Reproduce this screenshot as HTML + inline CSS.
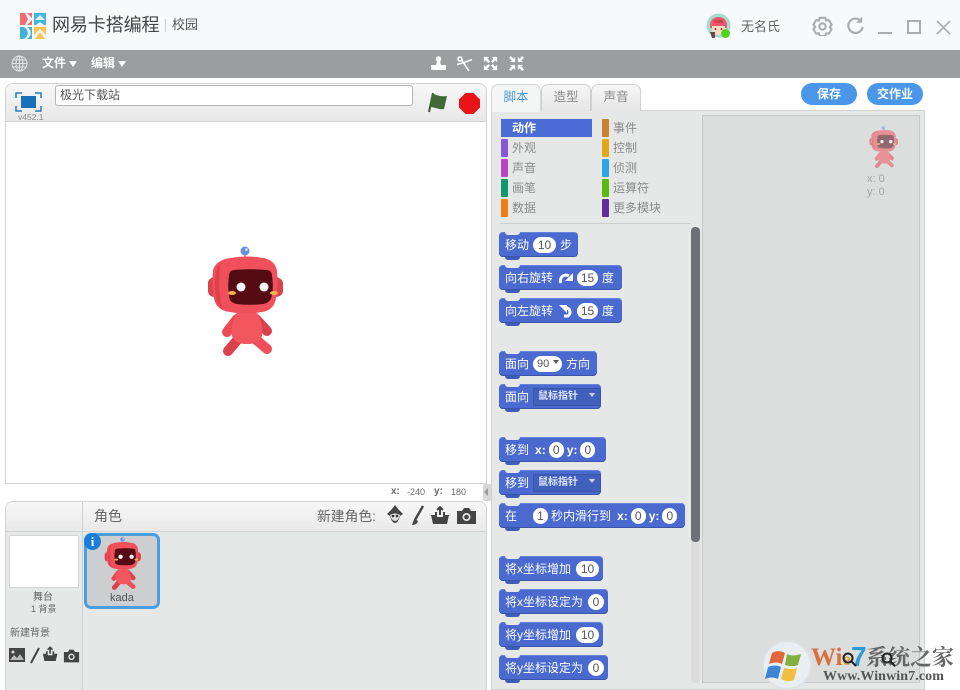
<!DOCTYPE html>
<html lang="zh"><head><meta charset="utf-8"><title>网易卡搭编程</title>
<style>
*{box-sizing:border-box}
html,body{margin:0;padding:0}
body{width:960px;height:690px;position:relative;overflow:hidden;background:#fff;font-family:"Liberation Sans","Noto Sans CJK SC",sans-serif;color:#555}
.a{position:absolute}
.t{position:absolute;white-space:nowrap;line-height:1}
.cat{position:absolute;width:7px;height:18px;border-radius:1px}
.cl{position:absolute;font-size:12px;line-height:18px;color:#8b8b8b;white-space:nowrap}
.b{position:absolute;left:499px;height:25px;background:#4a6ad0;border-radius:4px;color:#fff;font-size:12px;display:flex;align-items:center;padding-left:6px;white-space:nowrap;box-shadow:inset 0 -1px 0 #3a55a8,inset 0 1px 0 #6582dc}
.b:before{content:"";position:absolute;left:6px;top:0;width:15px;height:3px;background:#e6e8e8;border-radius:0 0 6px 6px}
.b:after{content:"";position:absolute;left:6px;bottom:-3px;width:15px;height:3px;background:#3f5cb8;border-radius:0 0 6px 6px}
.p{display:inline-flex;align-items:center;justify-content:center;background:#fff;color:#555;border-radius:8px;height:16px;font-size:12px;margin:0 4px}
.d{display:inline-block;background:#4160bd;color:#dfe5f7;height:18px;line-height:18px;font-size:10px;font-weight:bold;padding-left:5px;margin-left:4px;width:68px;position:relative;box-shadow:inset 0 0 0 1px #3a55a8}
.d:after{content:"";position:absolute;right:6px;top:5px;border:3px solid transparent;border-top:4px solid #cfd8f2}
.tab{position:absolute;top:84px;width:50px;height:27px;background:linear-gradient(#f6f6f6,#e6e6e6);border:1px solid #d0d0d0;border-bottom:none;border-radius:7px 7px 0 0;font-size:12.5px;text-align:center;line-height:24px;color:#8b8b8b}
.btn{position:absolute;top:83px;height:22px;background:#4a97ea;border-radius:11px;color:#fff;font-size:12px;font-weight:bold;text-align:center;line-height:22px}
</style></head>
<body>
<svg width="0" height="0" style="position:absolute"><defs>
<g id="robot">
<circle cx="38" cy="5" r="4.500" fill="#6a8fe0"/><circle cx="39.500" cy="3.500" r="1.300" fill="#dfe8fb"/><rect x="37" y="9" width="2" height="4" fill="#e88"/>
<path d="M8 31h0c-4 0-7 3-7 6v8c0 4 3 6 7 6z" fill="#d8434d"/><path d="M68 31c4 0 8 3 8 6v8c0 4-4 6-8 6z" fill="#d8434d"/>
<path d="M24 12c10-2 22-2 32 0 8 1 13 6 14 13 1 9 1 18-1 27-1 8-6 13-14 14-11 2-21 2-32 0-9-1-15-6-16-14-2-9-2-18-1-27 1-7 8-12 18-13z" fill="#f0505b"/>
<path d="M14 16C9 21 8 30 8 40c0 9 1 18 8 24-4-10-5-36-2-48z" fill="#dd414c"/>
<path d="M28 24c9-1 21-1 31 0 4 0 6 2 6 6 1 6 1 13 0 19-1 6-4 8-9 9-8 1-17 1-26 0-5-1-8-3-8-9-1-6-1-13 0-19 0-4 2-6 6-6z" fill="#550b13"/>
<circle cx="34" cy="41" r="4.500" fill="#fff"/><circle cx="57" cy="41" r="4.500" fill="#fff"/>
<ellipse cx="25" cy="47" rx="4" ry="2" fill="#f3b24b"/><ellipse cx="67" cy="47" rx="4" ry="2" fill="#f3b24b"/>
<path d="M30 73L20 86" stroke="#ec4a55" stroke-width="10" stroke-linecap="round"/>
<path d="M49 73L60 85" stroke="#d8434d" stroke-width="10" stroke-linecap="round"/>
<path d="M32 92L21 105" stroke="#dc424c" stroke-width="10" stroke-linecap="round"/>
<path d="M47 92L60 103" stroke="#ee4f5a" stroke-width="10" stroke-linecap="round"/>
<path d="M30 67h20c4 6 6 14 5 23-2 5-6 8-15 8-9 0-13-3-15-8-1-9 1-17 5-23z" fill="#f2565f"/>
</g>
<g id="upl"><path d="M1 9h4v-3h2v5h6v-5h2v3h4l-2 9H3z" fill="#444"/><path d="M10 9V2M7 4l3-3 3 3" stroke="#444" stroke-width="2" fill="none"/></g>
<g id="cam"><path d="M1 5h5l2-3h5l2 3h5v13H1z" fill="#444"/><circle cx="10.500" cy="11" r="4" fill="#e6e8e8"/><circle cx="10.500" cy="11" r="2.300" fill="#444"/></g>
</defs></svg>

<!-- title bar -->
<div class="a" style="left:0;top:0;width:960px;height:50px;background:#f8f9fb"></div>
<svg class="a" style="left:19px;top:12px" width="28" height="27" viewBox="0 0 28 27">
<path d="M1 1h12v12H1z" fill="#f4f4f4"/><path d="M1 1h5l3 6-3 6H1zM8 1h5v5zM13 13H8l5-5z" fill="#ee6f72"/>
<path d="M15 1h12v12H15z" fill="#41b7d9"/><path d="M21 3l5 5H16zM17 13l4-3 4 3z" fill="#f4f4f4"/>
<path d="M1 15h12v12H1z" fill="#41b2da"/><path d="M5 15c5 3 5 9 0 12h3c5-3 5-9 0-12z" fill="#f4f4f4"/>
<path d="M15 15h12v12H15z" fill="#f6c453"/><path d="M21 17l6 6v4H15v-4z" fill="#f4f4f4"/><path d="M21 20l5 7H16z" fill="#f6c453"/>
</svg>
<div class="t" style="left:52px;top:16px;font-size:18px;color:#444;letter-spacing:-.1px">网易卡搭编程</div>
<div class="a" style="left:165px;top:19px;width:1px;height:13px;background:#ccc"></div>
<div class="t" style="left:172px;top:18px;font-size:13px;color:#555">校园</div>

<svg class="a" style="left:706px;top:13px" width="27" height="27" viewBox="0 0 27 27">
<circle cx="12.500" cy="12.500" r="12" fill="#a5dccf"/><path d="M4 12c0-5 4-8 8.500-8S21 7 21 12v3H4z" fill="#ee5a6c"/><path d="M6 13h13v5c-1 3-3 4-6.500 4S7 21 6 18z" fill="#fbdcc8"/><path d="M8 7h9v3H8z" fill="#d8404f"/><circle cx="9.500" cy="16" r="1" fill="#933"/><circle cx="15.500" cy="16" r="1" fill="#933"/><path d="M4 19h5v6H6z" fill="#6b4a4a"/>
<circle cx="19.500" cy="20.500" r="4.500" fill="#4fd21e"/></svg>
<div class="t" style="left:741px;top:20px;font-size:13px;color:#666">无名氏</div>
<svg class="a" style="left:812px;top:16px" width="21" height="20" viewBox="0 0 22 22" fill="none" stroke="#a9acb0" stroke-width="2.300"><path d="M8 2h6l1 3 3-.5 3 5-2 2.500 2 2.500-3 5-3-.5-1 3H8l-1-3-3 .5-3-5L3 12 1 9.500l3-5 3 .5z"/><circle cx="11" cy="11.500" r="3.500"/></svg>
<svg class="a" style="left:846px;top:16px" width="18" height="19" viewBox="0 0 20 20" fill="none" stroke="#a9acb0" stroke-width="2.400"><path d="M17 5.500a8 8 0 1 0 1.500 6"/><path d="M18 0v7h-7" stroke="none" fill="#a9acb0"/></svg>
<div class="a" style="left:878px;top:32px;width:14px;height:2px;background:#a9acb0"></div>
<div class="a" style="left:907px;top:20px;width:14px;height:14px;border:2px solid #a9acb0"></div>
<svg class="a" style="left:936px;top:20px" width="15" height="15" viewBox="0 0 16 16" stroke="#a9acb0" stroke-width="1.800"><path d="M1 1l14 14M15 1L1 15"/></svg>

<!-- menu bar -->
<div class="a" style="left:0;top:50px;width:960px;height:28px;background:#9c9d9f"></div>
<svg class="a" style="left:11px;top:55px" width="17" height="17" viewBox="0 0 17 17" fill="none" stroke="#e4e4e4" stroke-width="1"><circle cx="8.500" cy="8.500" r="7.500"/><ellipse cx="8.500" cy="8.500" rx="3.500" ry="7.500"/><path d="M1 8.500h15M2 5h13M2 12h13M8.500 1v15"/></svg>
<div class="t" style="left:42px;top:57px;font-size:12px;font-weight:bold;color:#fff">文件</div>
<div class="a" style="left:69px;top:61px;border:4px solid transparent;border-top:6px solid #fff"></div>
<div class="t" style="left:91px;top:57px;font-size:12px;font-weight:bold;color:#fff">编辑</div>
<div class="a" style="left:118px;top:61px;border:4px solid transparent;border-top:6px solid #fff"></div>
<svg class="a" style="left:431px;top:56px" width="15" height="15" viewBox="0 0 15 15" fill="#fff"><circle cx="7.500" cy="3" r="2.800"/><path d="M6 5h3l1 4h5v5H0V9h5z"/></svg>
<svg class="a" style="left:457px;top:55px" width="16" height="17" viewBox="0 0 16 17" fill="none" stroke="#fff" stroke-width="1.600"><circle cx="3" cy="4" r="2"/><path d="M5 5.500L12 16M0 9.500l6-1.500 9-3.500"/></svg>
<svg class="a" style="left:483px;top:56px" width="15" height="15" viewBox="0 0 17 17" fill="#fff"><path d="M1 1h6L5 3l3 3-2 2-3-3-2 2zM16 1v6l-2-2-3 3-2-2 3-3-2-2zM1 16v-6l2 2 3-3 2 2-3 3 2 2zM16 16h-6l2-2-3-3 2-2 3 3 2-2z"/></svg>
<svg class="a" style="left:509px;top:56px" width="15" height="15" viewBox="0 0 17 17" fill="#fff"><path d="M7 7H1l2-2-3-3 2-2 3 3 2-2zM10 7V1l2 2 3-3 2 2-3 3 2 2zM7 10v6l-2-2-3 3-2-2 3-3-2-2zM10 10h6l-2 2 3 3-2 2-3-3-2 2z"/></svg>

<!-- stage -->
<div class="a" style="left:5px;top:83px;width:482px;height:401px;background:#fff;border:1px solid #d2d2d2;border-radius:8px 8px 0 0"></div>
<div class="a" style="left:6px;top:84px;width:480px;height:38px;background:linear-gradient(#f7f7f7,#e8e8e8);border-bottom:1px solid #d2d2d2;border-radius:7px 7px 0 0"></div>
<svg class="a" style="left:15px;top:92px" width="27" height="20" viewBox="0 0 27 20"><rect x="6" y="4" width="15" height="12" fill="#1a70b8"/><path d="M1 6V1h6M20 1h6v5M26 14v5h-6M7 19H1v-5" fill="none" stroke="#2c7ab8" stroke-width="1.500"/></svg>
<div class="t" style="left:18px;top:113px;font-size:8.500px;color:#8b8b8b">v452.1</div>
<div class="a" style="left:55px;top:85px;width:358px;height:21px;background:#fff;border:1px solid #b5b5b5;border-radius:3px;font-size:12px;line-height:18px;padding-left:4px;color:#555">极光下载站</div>
<svg class="a" style="left:425px;top:90px" width="24" height="24" viewBox="0 0 24 24"><path d="M4 22L8 3" stroke="#3d5a2e" stroke-width="2"/><path d="M7 3c4 2 8 4 15 3l-3 13c-5 1-9-2-14-2z" fill="#3f6a35"/></svg>
<svg class="a" style="left:459px;top:93px" width="21" height="21" viewBox="0 0 21 21"><path d="M6.500 0h8L21 6.500v8L14.500 21h-8L0 14.500v-8z" fill="#e8141a"/></svg>
<svg class="a" style="left:207px;top:246px" width="76" height="110" viewBox="0 0 76 110"><use href="#robot"/></svg>

<div class="t" style="left:391px;top:487px;font-size:10px;font-weight:bold;color:#666">x:</div>
<div class="t" style="left:407px;top:488px;font-size:9px;color:#666">-240</div>
<div class="t" style="left:434px;top:487px;font-size:10px;font-weight:bold;color:#666">y:</div>
<div class="t" style="left:451px;top:488px;font-size:9px;color:#666">180</div>
<div class="a" style="left:483px;top:484px;width:9px;height:17px;background:#d8d8d8;border-radius:2px"></div>
<div class="a" style="left:484px;top:488px;border:4px solid transparent;border-right:4px solid #999;border-left:none"></div>

<!-- sprites -->
<div class="a" style="left:5px;top:501px;width:482px;height:189px;background:#e6e8e8;border:1px solid #d2d2d2;border-bottom:none;border-radius:8px 8px 0 0"></div>
<div class="a" style="left:6px;top:502px;width:480px;height:30px;background:linear-gradient(#f7f7f7,#e9e9e9);border-bottom:1px solid #d2d2d2;border-radius:7px 7px 0 0"></div>
<div class="a" style="left:82px;top:502px;width:1px;height:188px;background:#d0d0d0"></div>
<div class="t" style="left:94px;top:509px;font-size:14px;color:#666">角色</div>
<div class="t" style="left:317px;top:510px;font-size:13.800px;color:#666">新建角色:</div>
<svg class="a" style="left:386px;top:505px" width="18" height="20" viewBox="0 0 18 20"><path d="M9 0l3 4 5 5-3 2c-1 4-3 7-5 7s-4-3-5-7L1 9l5-5z" fill="#444"/><path d="M4 10c3-2 7-2 10 0-1 4-3 6-5 6s-4-2-5-6z" fill="#ddd"/><circle cx="7" cy="11" r="1.300" fill="#333"/><circle cx="11" cy="11" r="1.300" fill="#333"/></svg>
<svg class="a" style="left:409px;top:505px" width="16" height="21" viewBox="0 0 16 21"><path d="M14 1L6 15" stroke="#444" stroke-width="2.400"/><path d="M6 14l3 2c-1 3-3 4-6 4 1-2 1-5 3-6z" fill="#444"/></svg>
<svg class="a" style="left:430px;top:506px" width="21" height="20" viewBox="0 0 21 20"><use href="#upl"/></svg>
<svg class="a" style="left:456px;top:506px" width="21" height="20" viewBox="0 0 21 20"><use href="#cam"/></svg>

<div class="a" style="left:9px;top:535px;width:70px;height:53px;background:#fff;border:1px solid #d5d5d5"></div>
<div class="t" style="left:33px;top:593px;font-size:10px;color:#666">舞台</div>
<div class="t" style="left:31px;top:605px;font-size:9px;color:#666">1 背景</div>
<div class="t" style="left:10px;top:629px;font-size:10px;color:#666">新建背景</div>
<svg class="a" style="left:9px;top:648px" width="16" height="14" viewBox="0 0 16 14"><rect width="16" height="14" fill="#444"/><path d="M1 12l4-5 3 3 3-4 4 6z" fill="#bbb"/><circle cx="4" cy="4" r="1.500" fill="#ddd"/></svg>
<svg class="a" style="left:28px;top:647px" width="13" height="18" viewBox="0 0 13 18"><path d="M11 1L3 16" stroke="#444" stroke-width="2"/></svg>
<svg class="a" style="left:42px;top:646px" width="17" height="17" viewBox="0 0 21 20"><use href="#upl"/></svg>
<svg class="a" style="left:63px;top:648px" width="17" height="16" viewBox="0 0 21 20"><use href="#cam"/></svg>

<div class="a" style="left:84px;top:533px;width:76px;height:76px;background:#ccced0;border:3px solid #4a9ddf;border-radius:7px"></div>
<svg class="a" style="left:104px;top:537px" width="37" height="53" viewBox="0 0 76 110"><use href="#robot"/></svg>
<div class="a" style="left:84px;top:533px;width:17px;height:17px;background:#1a7ed8;border-radius:50%;color:#fff;font:bold 13px/17px 'Liberation Serif',serif;text-align:center">i</div>
<div class="t" style="left:110px;top:593px;font-size:11px;color:#555">kada</div>

<!-- tabs + scripts -->
<div class="a" style="left:491px;top:110px;width:434px;height:580px;background:#e6e8e8;border:1px solid #d2d2d2"></div>
<div class="tab" style="left:491px;background:#f4f5f5;color:#4a9dd4;height:28px;z-index:2;border-color:#d6d6d6">脚本</div>
<div class="tab" style="left:541px">造型</div>
<div class="tab" style="left:591px">声音</div>
<div class="btn" style="left:801px;width:56px;top:83px">保存</div>
<div class="btn" style="left:867px;width:56px;top:83px">交作业</div>

<div class="a" style="left:501px;top:119px;width:91px;height:18px;background:#4a6cd4;color:#fff;font-size:12px;font-weight:bold;line-height:18px;padding-left:11px">动作</div>
<div class="cat" style="left:501px;top:139px;background:#8a55d7"></div><div class="cl" style="left:512px;top:139px">外观</div>
<div class="cat" style="left:501px;top:159px;background:#bb42c3"></div><div class="cl" style="left:512px;top:159px">声音</div>
<div class="cat" style="left:501px;top:179px;background:#0e9a6c"></div><div class="cl" style="left:512px;top:179px">画笔</div>
<div class="cat" style="left:501px;top:199px;background:#ee7d16"></div><div class="cl" style="left:512px;top:199px">数据</div>
<div class="cat" style="left:602px;top:119px;background:#c88330"></div><div class="cl" style="left:613px;top:119px">事件</div>
<div class="cat" style="left:602px;top:139px;background:#e1a91a"></div><div class="cl" style="left:613px;top:139px">控制</div>
<div class="cat" style="left:602px;top:159px;background:#2ca5e2"></div><div class="cl" style="left:613px;top:159px">侦测</div>
<div class="cat" style="left:602px;top:179px;background:#5cb712"></div><div class="cl" style="left:613px;top:179px">运算符</div>
<div class="cat" style="left:602px;top:199px;background:#632d99"></div><div class="cl" style="left:613px;top:199px">更多模块</div>
<div class="a" style="left:500px;top:223px;width:191px;height:1px;background:#cfcfcf"></div>

<div class="a" style="left:691px;top:227px;width:9px;height:456px;background:#dcdcdc;border-radius:4px"></div>
<div class="a" style="left:691px;top:227px;width:9px;height:315px;background:#6f7073;border-radius:4px"></div>

<div class="b" style="top:232px;width:79px">移动<span class="p" style="width:23px">10</span>步</div>
<div class="b" style="top:265px;width:123px">向右旋转<svg width="16" height="14" viewBox="0 0 16 14" style="margin-left:5px"><path d="M3 12a5.500 5.500 0 0 1 8-7" stroke="#fff" stroke-width="3" fill="none"/><path d="M15 2v8H7z" fill="#fff"/></svg><span class="p" style="width:21px;margin:0 4px 0 3px">15</span>度</div>
<div class="b" style="top:298px;width:123px">向左旋转<svg width="16" height="14" viewBox="0 0 16 14" style="margin-left:5px"><path d="M6 4a4.500 4.500 0 0 1 4 8H6" stroke="#fff" stroke-width="3" fill="none"/><path d="M1 1h8v8z" fill="#fff"/></svg><span class="p" style="width:21px;margin:0 4px 0 3px">15</span>度</div>
<div class="b" style="top:351px;width:98px">面向<span class="p" style="width:29px;font-size:11px;justify-content:flex-start;padding-left:4px;position:relative">90<span style="position:absolute;right:3px;top:4px;border:3px solid transparent;border-top:4px solid #555"></span></span>方向</div>
<div class="b" style="top:384px;width:102px">面向<span class="d">鼠标指针</span></div>
<div class="b" style="top:437px;width:107px">移到<b style="margin-left:6px;font-size:12px">x:</b><span class="p" style="width:15px;margin:0 3px">0</span><b style="font-size:12px">y:</b><span class="p" style="width:15px;margin:0 0 0 3px">0</span></div>
<div class="b" style="top:470px;width:102px">移到<span class="d">鼠标指针</span></div>
<div class="b" style="top:503px;width:186px">在<span class="p" style="width:15px;margin:0 3px 0 16px">1</span>秒内滑行到<b style="margin-left:6px;font-size:12px">x:</b><span class="p" style="width:15px;margin:0 3px">0</span><b style="font-size:12px">y:</b><span class="p" style="width:15px;margin:0 0 0 3px">0</span></div>
<div class="b" style="top:556px;width:104px">将x坐标增加<span class="p" style="width:23px;margin-left:5px">10</span></div>
<div class="b" style="top:589px;width:109px">将x坐标设定为<span class="p" style="width:16px;margin-left:5px">0</span></div>
<div class="b" style="top:622px;width:104px">将y坐标增加<span class="p" style="width:23px;margin-left:5px">10</span></div>
<div class="b" style="top:655px;width:109px">将y坐标设定为<span class="p" style="width:16px;margin-left:5px">0</span></div>

<div class="a" style="left:702px;top:115px;width:218px;height:568px;background:#dcdddd;border:1px solid #c8c8c8"></div>
<svg class="a" style="left:869px;top:126px;opacity:.55" width="29" height="42" viewBox="0 0 76 110"><use href="#robot"/></svg>
<div class="t" style="left:867px;top:173px;font-size:11px;color:#a5a5a5;line-height:12.500px;white-space:pre">x: 0
y: 0</div>

<!-- watermark -->
<svg class="a" style="left:762px;top:640px" width="50" height="50" viewBox="0 0 50 50"><circle cx="25" cy="25" r="24" fill="#e9eef2" stroke="#dde2e6" stroke-width="2"/><path d="M10 13c5-3 9-2 13 0l-3 11c-4-2-8-2-13 0z" fill="#e0673a"/><path d="M25 14c4 2 8 2 14 0l-3 11c-5 2-9 1-13 0z" fill="#7fb13c"/><path d="M6 27c5-2 9-2 13 0l-3 12c-4-2-8-2-13 0z" fill="#3d86d6"/><path d="M22 28c4 1 8 2 13 0l-3 12c-5 2-9 1-13-1z" fill="#f0bf3f"/></svg>
<div class="t" style="left:811px;top:645px;font:bold 25px/1 'Liberation Serif',serif;color:#d9713e">Wi<span style="font-size:18px;color:#d9a23e">e</span></div>
<div class="t" style="left:851px;top:643px;font:bold 28px/1 'Liberation Sans',sans-serif;color:#2d9bd6">7</div>
<div class="t" style="left:866px;top:646px;font:bold 22px/1 'Noto Serif CJK SC',serif;color:#666;letter-spacing:0">系统之家</div>
<svg class="a" style="left:841px;top:651px" width="60" height="20" viewBox="0 0 60 20" fill="none" stroke="#222" stroke-width="2"><circle cx="7" cy="7" r="4.500"/><path d="M10 10l5 5"/><circle cx="46" cy="7" r="4.500"/><path d="M49 10l5 5"/></svg>
<div class="t" style="left:823px;top:670px;font:bold 14px/1 'Liberation Serif',serif;color:#555;letter-spacing:.1px">Www.Winwin7.com</div>
</body></html>
